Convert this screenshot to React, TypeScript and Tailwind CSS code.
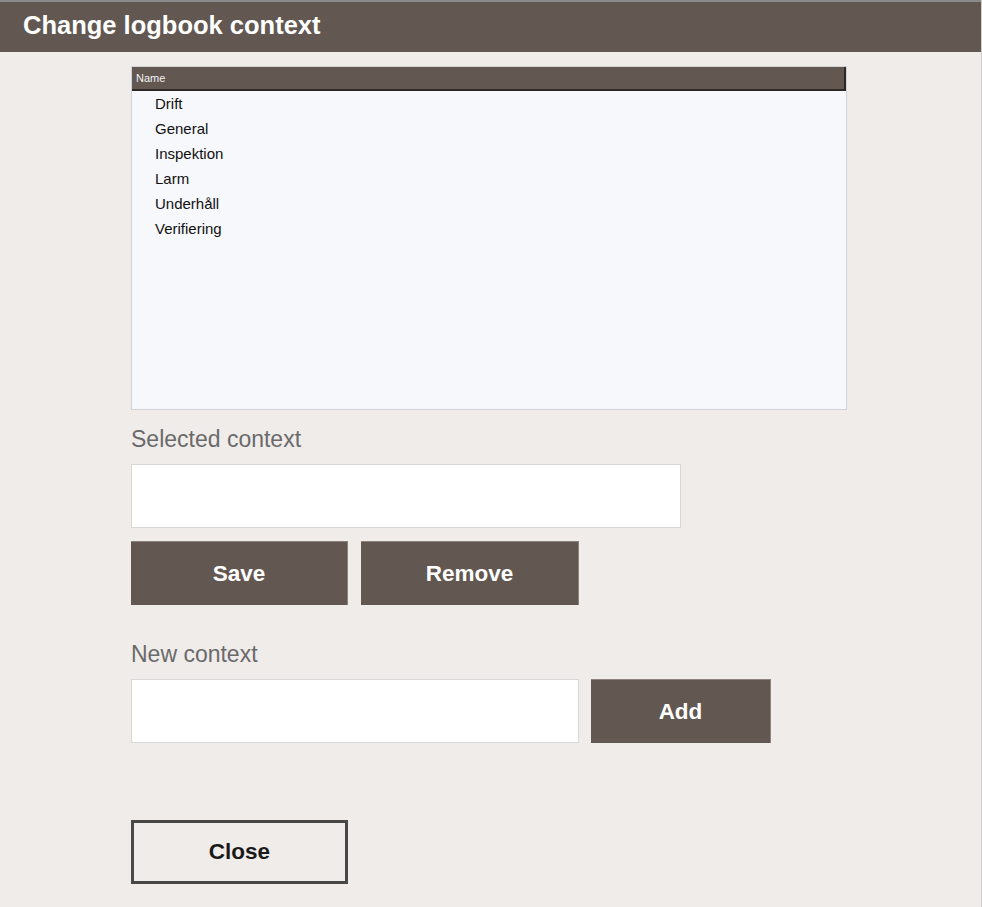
import React, { useState } from 'react';

const contexts = ['Drift', 'General', 'Inspektion', 'Larm', 'Underhåll', 'Verifiering'];

const FilledButton = ({ label, className }: { label: string; className?: string }) => (
  <button className={`h-[64px] bg-[#625851] border-t border-r border-[#8c827b] text-white font-bold text-[22.5px] ${className}`}>
    {label}
  </button>
);

export default function App() {
  const [selected, setSelected] = useState('');
  const [newContext, setNewContext] = useState('');

  return (
    <div className="min-h-[907px] bg-[#f0ecea] border-r border-[#cfcfcf] font-['Liberation_Sans',Arial,sans-serif]">
      <div className="h-[2px] bg-[#8a8a8a]" />
      <div className="h-[50px] bg-[#625851] pl-[23px] pt-[9px]">
        <h1 className="text-white font-bold text-[25.5px] leading-[1.15]">Change logbook context</h1>
      </div>

      <div className="pl-[131px] pt-[14px] flex flex-col">
        <div className="w-[716px] h-[344px] border border-[#d2d2d6] bg-[#f7f8fc] flex flex-col">
          <div className="h-[24px] bg-[#625851] border-b-2 border-r-2 border-[#2e2825] pl-[4px] flex items-center">
            <span className="text-[11px] text-[#f2f2f2]">Name</span>
          </div>
          <ul className="flex flex-col pt-[1px]">
            {contexts.map((c) => (
              <li
                key={c}
                onClick={() => setSelected(c)}
                className="h-[25px] pl-[23px] flex items-center text-[15px] text-[#111] cursor-default"
              >
                {c}
              </li>
            ))}
          </ul>
        </div>

        <label className="mt-[16px] text-[23px] leading-[26px] text-[#6a6a6a]">Selected context</label>
        <input
          value={selected}
          onChange={(e) => setSelected(e.target.value)}
          className="mt-[12px] w-[550px] h-[64px] bg-white border border-[#d8d8d8] outline-none px-3 text-[20px]"
        />
        <div className="mt-[13px] flex gap-[13px]">
          <FilledButton label="Save" className="w-[217px]" />
          <FilledButton label="Remove" className="w-[218px]" />
        </div>

        <label className="mt-[36px] text-[23px] leading-[26px] text-[#6a6a6a]">New context</label>
        <div className="mt-[12px] flex gap-[12px]">
          <input
            value={newContext}
            onChange={(e) => setNewContext(e.target.value)}
            className="w-[448px] h-[64px] bg-white border border-[#d8d8d8] outline-none px-3 text-[20px]"
          />
          <FilledButton label="Add" className="w-[180px]" />
        </div>

        <button className="mt-[77px] w-[217px] h-[64px] border-[3px] border-[#484848] text-[#1a1a1a] font-bold text-[22.5px]">
          Close
        </button>
      </div>
    </div>
  );
}
